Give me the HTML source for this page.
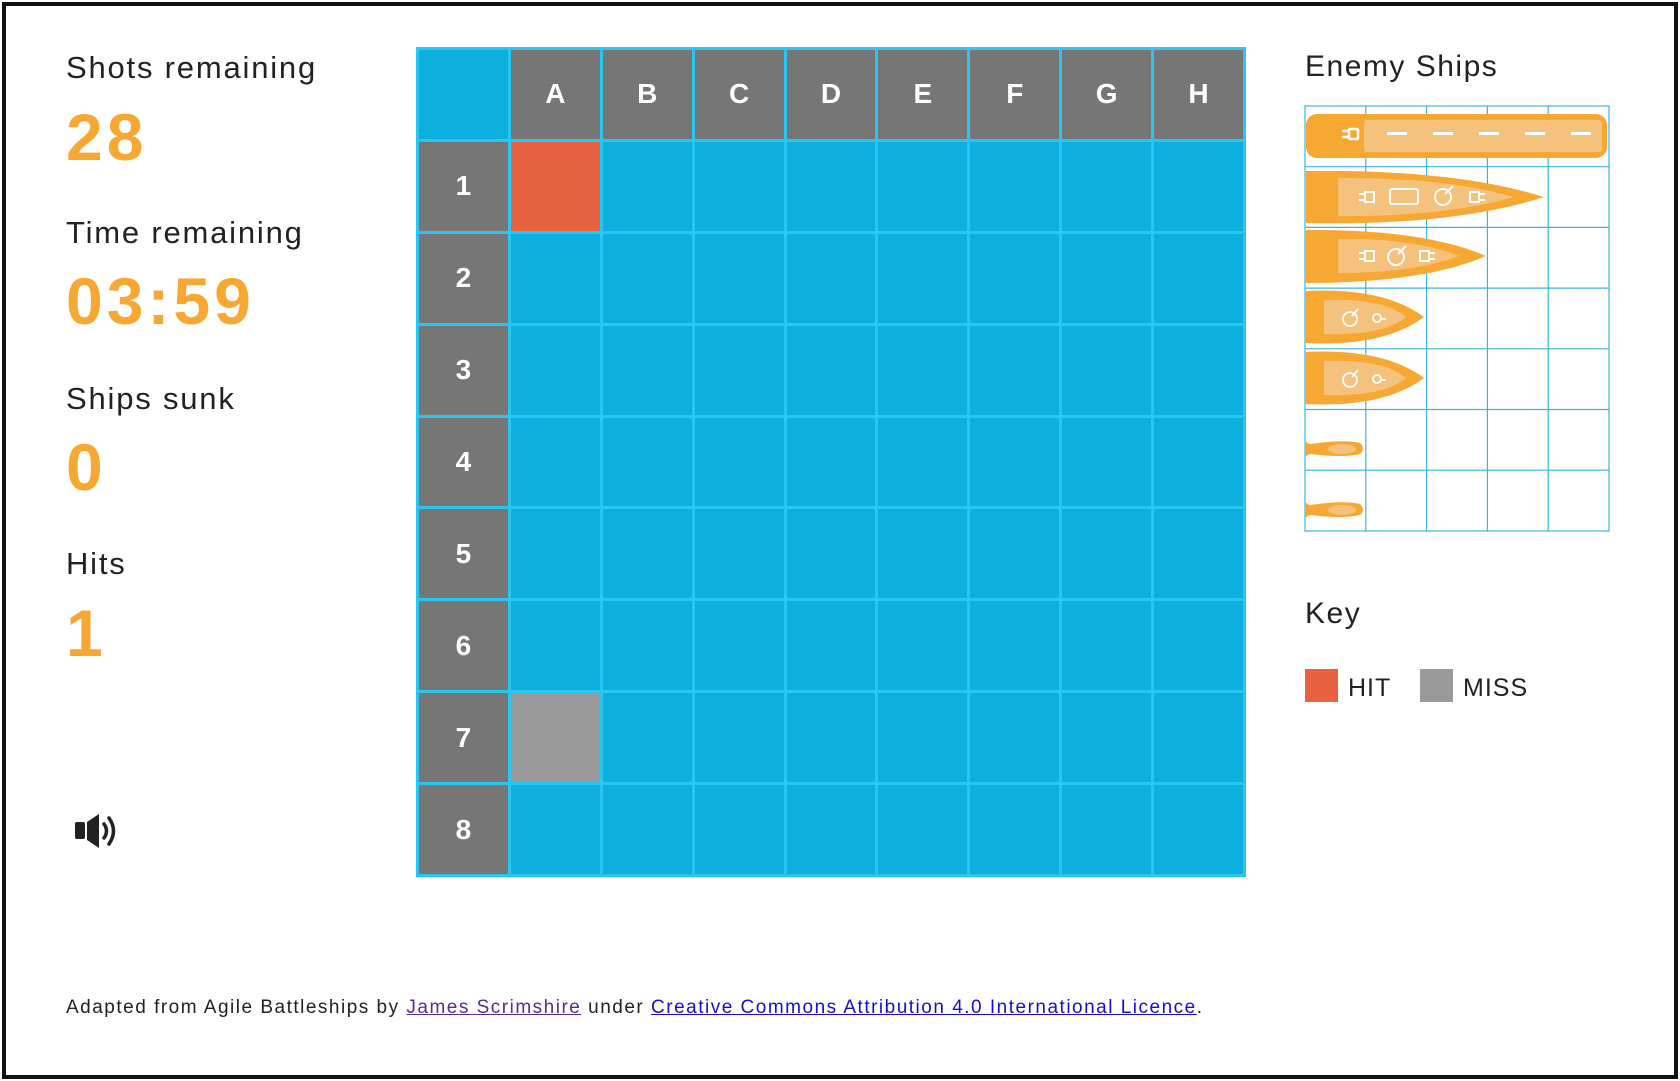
<!DOCTYPE html>
<html><head><meta charset="utf-8"><style>
*{margin:0;padding:0;box-sizing:border-box}
body{width:1680px;height:1081px;background:#fff;font-family:"Liberation Sans",sans-serif;position:relative;overflow:hidden}
.frame{position:absolute;left:2px;top:2px;width:1676px;height:1077px;border:4px solid #111}
.lbl{position:absolute;left:66px;font-size:31px;letter-spacing:1.8px;color:#222;line-height:1}
.num{position:absolute;left:66px;font-size:66px;font-weight:bold;letter-spacing:4px;color:#f7a833;line-height:1}
.grid{position:absolute;left:416px;top:47px;width:830px;height:830px;background:#2ac6f2;display:grid;grid-template-columns:repeat(9,1fr);grid-template-rows:repeat(9,1fr);gap:3px;padding:3px}
.grid div{background:#0cafdd;display:flex;align-items:center;justify-content:center;color:#fff;font-weight:bold;font-size:28px}
.grid .g{background:#767676}
.grid .h{background:#e8623f}
.grid .m{background:#9a9a9a}
.t{position:absolute;font-size:30px;letter-spacing:1.5px;color:#222;line-height:1}
.foot{position:absolute;left:66px;top:997px;font-size:19px;letter-spacing:1.5px;color:#222}
.foot a{color:#1a0dcc}
.foot a.v{color:#5b2c8a}
</style></head><body>
<div class="frame"></div>
<div class="lbl" style="top:52px">Shots remaining</div>
<div class="num" style="top:104px">28</div>
<div class="lbl" style="top:217px">Time remaining</div>
<div class="num" style="top:268px">03:59</div>
<div class="lbl" style="top:383px">Ships sunk</div>
<div class="num" style="top:434px">0</div>
<div class="lbl" style="top:548px">Hits</div>
<div class="num" style="top:600px">1</div>
<svg style="position:absolute;left:74px;top:812px" width="50" height="38" viewBox="0 0 50 38">
<rect x="1" y="10" width="10" height="17" rx="2" fill="#222"/>
<path d="M13 10 L25 2 L25 36 L13 28Z" fill="#222"/>
<path d="M30 12 Q35 19 30 26" stroke="#222" stroke-width="3.5" fill="none" stroke-linecap="round"/>
<path d="M35 6 Q44 19 35 32" stroke="#222" stroke-width="3.5" fill="none" stroke-linecap="round"/>
</svg>
<div class="grid">
<div></div><div class="g">A</div><div class="g">B</div><div class="g">C</div><div class="g">D</div><div class="g">E</div><div class="g">F</div><div class="g">G</div><div class="g">H</div>
<div class="g">1</div><div class="h"></div><div></div><div></div><div></div><div></div><div></div><div></div><div></div>
<div class="g">2</div><div></div><div></div><div></div><div></div><div></div><div></div><div></div><div></div>
<div class="g">3</div><div></div><div></div><div></div><div></div><div></div><div></div><div></div><div></div>
<div class="g">4</div><div></div><div></div><div></div><div></div><div></div><div></div><div></div><div></div>
<div class="g">5</div><div></div><div></div><div></div><div></div><div></div><div></div><div></div><div></div>
<div class="g">6</div><div></div><div></div><div></div><div></div><div></div><div></div><div></div><div></div>
<div class="g">7</div><div class="m"></div><div></div><div></div><div></div><div></div><div></div><div></div><div></div>
<div class="g">8</div><div></div><div></div><div></div><div></div><div></div><div></div><div></div><div></div>
</div>
<div class="t" style="left:1305px;top:52px">Enemy Ships</div>
<svg style="position:absolute;left:1304px;top:105px" width="306" height="428" viewBox="0 0 306 428">
<g stroke="#3fb3dc" stroke-width="1.2" fill="none">
<rect x="1" y="1" width="304" height="425"/>
<path d="M61.8 1V426M122.6 1V426M183.4 1V426M244.2 1V426"/>
<path d="M1 61.7H305M1 122.4H305M1 183.1H305M1 243.8H305M1 304.5H305M1 365.2H305"/>
</g>
<rect x="2" y="9" width="301" height="44" rx="11" fill="#f7a833"/>
<rect x="60" y="15" width="238" height="32" rx="3" fill="#f5c27e"/>
<g fill="#fff"><rect x="83" y="27" width="20" height="3"/><rect x="129" y="27" width="20" height="3"/><rect x="175" y="27" width="20" height="3"/><rect x="221" y="27" width="20" height="3"/><rect x="267" y="27" width="20" height="3"/></g>
<g stroke="#fff" stroke-width="2.5" fill="none"><rect x="45" y="24" width="9" height="10" rx="1"/><path d="M38 26h7M38 32h7"/></g>
<path d="M2 66 Q150 64 240 92 Q150 121 2 118 Z" fill="#f7a833"/>
<path d="M34 73 Q140 72 210 92 Q140 112 34 111 Z" fill="#f5c27e"/>
<g stroke="#fff" stroke-width="2" fill="none">
<rect x="61" y="87" width="9" height="10"/><path d="M55 89h6M55 95h6"/>
<rect x="86" y="84" width="28" height="15" rx="2"/>
<circle cx="139" cy="92" r="8"/><path d="M141 89l8-8"/>
<rect x="166" y="87" width="9" height="10"/><path d="M175 89h6M175 95h6"/>
</g>
<path d="M1 125 Q120 124 182 151 Q120 178 1 178 Z" fill="#f7a833"/>
<path d="M34 134 Q110 133 155 151 Q110 168 34 168 Z" fill="#f5c27e"/>
<g stroke="#fff" stroke-width="2" fill="none">
<rect x="61" y="146" width="9" height="10"/><path d="M55 148h6M55 154h6"/>
<circle cx="92" cy="152" r="8"/><path d="M94 149l8-8"/>
<rect x="116" y="146" width="9" height="10"/><path d="M125 148h6M125 154h6"/>
</g>
<g id="s4">
<path d="M1 186 Q80 182 120 212 Q80 242 1 238 Z" fill="#f7a833"/>
<path d="M20 195 Q80 193 102 212 Q80 231 20 229 Z" fill="#f5c27e"/>
<g stroke="#fff" stroke-width="1.8" fill="none"><circle cx="46" cy="214" r="7"/><path d="M48 211l6-7"/><circle cx="73" cy="213" r="4"/><path d="M77 214h5"/></g>
</g>
<use href="#s4" transform="translate(0,61)"/>
<g id="s6"><path d="M1 334 Q2 338 6 339 Q40 334 56 338 Q62 344 56 349 Q40 353 6 349 Q2 350 1 354 Z" fill="#f7a833"/>
<ellipse cx="38" cy="344" rx="14" ry="5" fill="#f5c27e"/></g>
<use href="#s6" transform="translate(0,61)"/>
</svg>
<div class="t" style="left:1305px;top:599px">Key</div>
<div style="position:absolute;left:1305px;top:669px;width:33px;height:33px;background:#e8623f"></div>
<div class="t" style="left:1348px;top:676px;font-size:25px;letter-spacing:1px">HIT</div>
<div style="position:absolute;left:1420px;top:669px;width:33px;height:33px;background:#9a9a9a"></div>
<div class="t" style="left:1463px;top:676px;font-size:25px;letter-spacing:1px">MISS</div>
<div class="foot">Adapted from Agile Battleships by <a class="v" href="#">James Scrimshire</a> under <a href="#">Creative Commons Attribution 4.0 International Licence</a>.</div>
</body></html>
